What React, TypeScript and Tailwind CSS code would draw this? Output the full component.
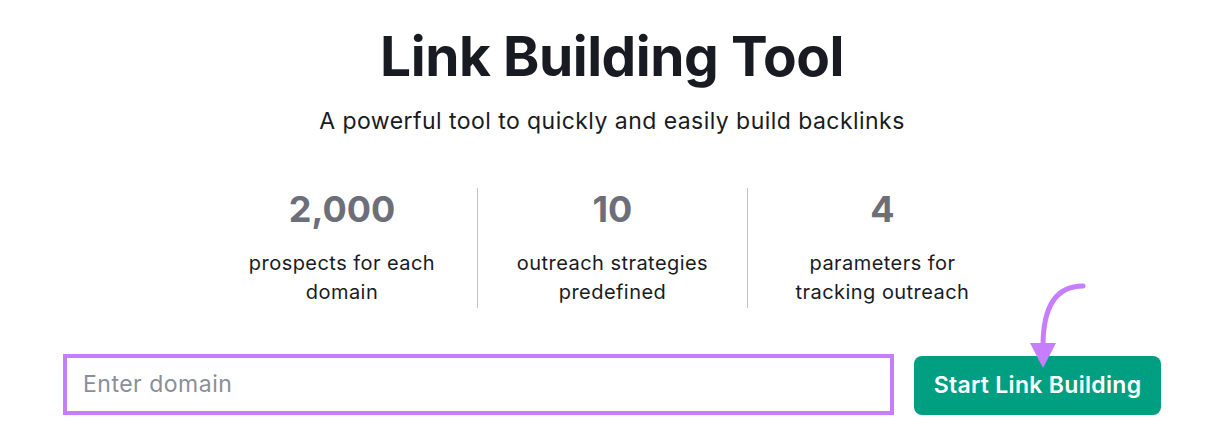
import React from "react";

const stats = [
  { n: "2,000", l: ["prospects for each", "domain"] },
  { n: "10", l: ["outreach strategies", "predefined"] },
  { n: "4", l: ["parameters for", "tracking outreach"] },
];

export default function App() {
  return (
    <div
      className="relative w-[1228px] h-[446px] bg-white flex flex-col items-center overflow-hidden pr-[4px]"
      style={{ fontFamily: "Inter, 'Noto Sans', sans-serif" }}
    >
      <h1 className="mt-[22px] text-[55px] leading-[68px] font-bold text-[#191b23] tracking-[-0.45px]">
        Link Building Tool
      </h1>
      <p className="mt-[16px] text-[23px] leading-[30px] text-[#191b23] tracking-[0.45px]">
        A powerful tool to quickly and easily build backlinks
      </p>
      <div className="mt-[52px] flex">
        {stats.map((s, i) => (
          <div
            key={i}
            className={`w-[270px] h-[120px] flex flex-col items-center ${i > 0 ? "border-l border-[#c4c4c8]" : ""}`}
          >
            <div className="-mt-[1px] text-[36px] leading-[44px] font-bold text-[#6c6e79]">{s.n}</div>
            <div className="mt-[18px] text-[20px] leading-[29px] text-[#191b23] text-center tracking-[0.45px]">
              {s.l[0]}
              <br />
              {s.l[1]}
            </div>
          </div>
        ))}
      </div>
      <div className="mt-[46px] flex items-end gap-[20px]">
        <div className="w-[831px] h-[61px] border-[4px] border-[#c77dff] bg-white flex items-center px-[16px]">
          <span className="text-[23px] text-[#8a8e99] tracking-[0.5px]">Enter domain</span>
        </div>
        <div className="relative w-[247px] h-[59px] rounded-[8px] bg-[#009f81] flex items-center justify-center">
          <span className="text-[23px] font-semibold text-white tracking-[0.3px]">Start Link Building</span>
        </div>
      </div>
      <svg
        className="absolute left-[1020px] top-[280px]"
        width="80"
        height="90"
        viewBox="0 0 80 90"
      >
        <path
          d="M63 6 C38 6 23 24 23 66"
          fill="none"
          stroke="#c77dff"
          strokeWidth="5"
          strokeLinecap="round"
        />
        <polygon points="10,63 36,63 23,88" fill="#c77dff" />
      </svg>
    </div>
  );
}
